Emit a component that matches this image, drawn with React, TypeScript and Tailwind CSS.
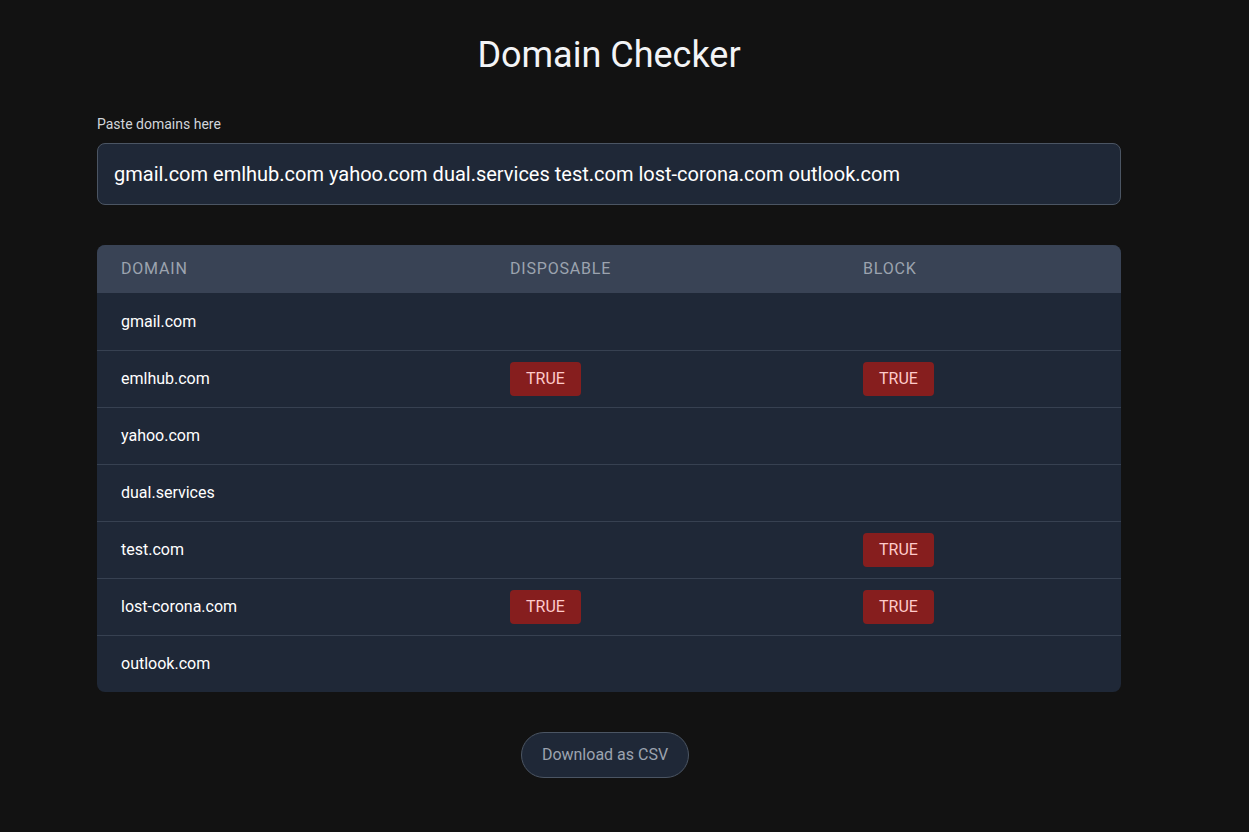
import React from "react";

const rows: { d: string; disp: boolean; block: boolean }[] = [
  { d: "gmail.com", disp: false, block: false },
  { d: "emlhub.com", disp: true, block: true },
  { d: "yahoo.com", disp: false, block: false },
  { d: "dual.services", disp: false, block: false },
  { d: "test.com", disp: false, block: true },
  { d: "lost-corona.com", disp: true, block: true },
  { d: "outlook.com", disp: false, block: false },
];

function Badge() {
  return (
    <span className="inline-block rounded bg-[#861e1e] px-4 py-[5px] text-base leading-6 text-[#fecaca]">
      TRUE
    </span>
  );
}

export default function App() {
  return (
    <div
      className="min-h-[832px] w-full bg-[#121212] text-white"
      style={{ fontFamily: "Roboto, 'Noto Sans', sans-serif" }}
    >
      <div className="w-[1218px]">
        <div className="mx-auto w-[1024px] pt-[35px]">
          <h1 className="text-center text-[36px] leading-10 font-normal text-[#f3f4f6]">
            Domain Checker
          </h1>
          <label className="mt-[39px] block text-sm leading-5 text-[#d1d5db]">
            Paste domains here
          </label>
          <div className="mt-[9px] flex h-[62px] items-center rounded-lg border border-[#4b5563] bg-[#1f2837] px-4 text-xl text-white">
            gmail.com emlhub.com yahoo.com dual.services test.com lost-corona.com outlook.com
          </div>

          <div className="mt-10 overflow-hidden rounded-lg bg-[#1f2837]">
            <div className="grid h-12 grid-cols-[389px_353px_1fr] items-center bg-[#394355] text-base tracking-wider text-[#9ca3af]">
              <div className="pl-6">DOMAIN</div>
              <div className="pl-6">DISPOSABLE</div>
              <div className="pl-6">BLOCK</div>
            </div>
            {rows.map((r, i) => (
              <div
                key={r.d}
                className={`grid h-[57px] grid-cols-[389px_353px_1fr] items-center text-base ${
                  i > 0 ? "border-t border-[#374151]" : ""
                }`}
              >
                <div className="pl-6 text-white">{r.d}</div>
                <div className="pl-6">{r.disp ? <Badge /> : null}</div>
                <div className="pl-6">{r.block ? <Badge /> : null}</div>
              </div>
            ))}
          </div>

          <div className="mt-10 flex justify-center pr-2">
            <button className="h-[46px] rounded-full border border-[#4b5563] bg-[#1f2837] px-5 text-base text-[#9ca3af]">
              Download as CSV
            </button>
          </div>
        </div>
      </div>
    </div>
  );
}
